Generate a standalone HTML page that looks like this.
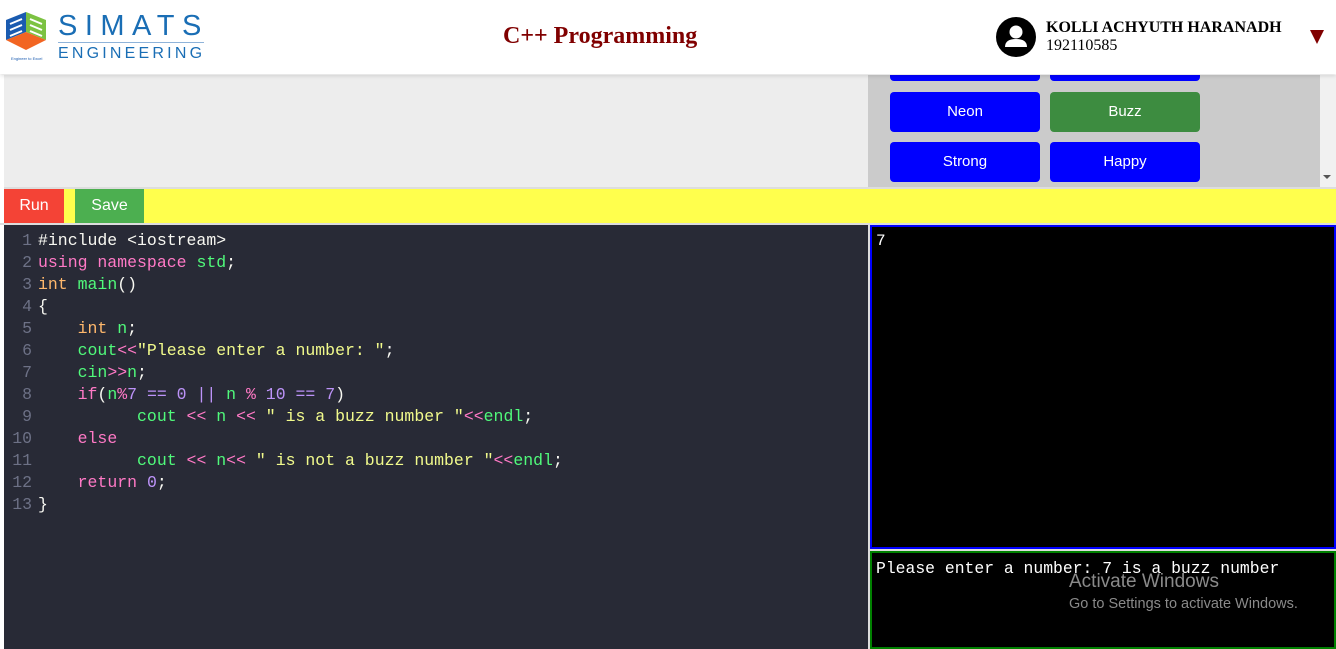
<!DOCTYPE html>
<html><head><meta charset="utf-8"><style>
*{margin:0;padding:0;box-sizing:border-box}
body{width:1336px;height:649px;overflow:hidden;background:#fff;font-family:"Liberation Sans",sans-serif;position:relative}
.hdr{position:absolute;left:0;top:0;width:1336px;height:74px;background:#fff;box-shadow:0 2px 4px rgba(0,0,0,.12);z-index:2}
.abs{position:absolute}
.btn{position:absolute;width:150px;height:40px;border-radius:4px;background:#0000ff;color:#fff;font-size:15px;text-align:center;line-height:40px}
.code{position:absolute;left:4px;top:225px;width:864px;height:424px;background:#282a36;font-family:"Liberation Mono",monospace;font-size:16.5px;line-height:22px;color:#f8f8f2;padding-top:5px;white-space:pre}
.ln{display:inline-block;width:28px;text-align:right;color:#6d7186;margin-right:6px}
.k{color:#ff79c6}.g{color:#50fa7b}.o{color:#ffb86c}.s{color:#f1fa8c}.p{color:#bd93f9}
</style></head><body>
<div class="hdr">
 <svg class="abs" style="left:4px;top:10px" width="44" height="44" viewBox="0 0 44 44">
  <polygon points="2,10 22,2 22,22 2,30" fill="#1a5bb0"/>
  <polygon points="22,2 42,10 42,30 22,22" fill="#7cc242"/>
  <polygon points="2,30 22,22 42,30 22,40" fill="#f26522"/>
  <path d="M6 14 L18 9 M6 20 L18 15 M6 26 L18 21" stroke="#fff" stroke-width="2"/>
  <path d="M26 9 L38 14 M26 15 L38 20 M26 21 L38 26" stroke="#fff" stroke-width="2"/>
 </svg>
 <div class="abs" style="left:11px;top:56px;font-size:4px;color:#1a5bb0">Engineer to Excel</div>
 <div class="abs" style="left:58px;top:10px;font-size:29px;color:#1a6eb5;letter-spacing:7.5px;line-height:32px">SIMATS</div>
 <div class="abs" style="left:58px;top:42px;width:146px;height:1px;background:#8fb3d9"></div>
 <div class="abs" style="left:58px;top:45px;font-size:16px;color:#1a6eb5;letter-spacing:3.2px;line-height:18px">ENGINEERING</div>
 <div class="abs" style="left:503px;top:23px;font-family:'Liberation Serif',serif;font-weight:bold;font-size:24px;color:#800000">C++ Programming</div>
 <svg class="abs" style="left:996px;top:17px" width="40" height="40" viewBox="0 0 40 40"><circle cx="20" cy="20" r="20" fill="#000"/><circle cx="20" cy="15" r="6.5" fill="#fff"/><path d="M9 30 Q9 22 20 22 Q31 22 31 30 Z" fill="#fff"/></svg>
 <div class="abs" style="left:1046px;top:19px;font-family:'Liberation Serif',serif;font-weight:bold;font-size:16px;color:#000">KOLLI ACHYUTH HARANADH</div>
 <div class="abs" style="left:1046px;top:37px;font-family:'Liberation Serif',serif;font-size:16px;color:#000">192110585</div>
 <div class="abs" style="left:1310px;top:30px;width:0;height:0;border-left:7px solid transparent;border-right:7px solid transparent;border-top:14px solid #800000"></div>
</div>
<div class="abs" style="left:4px;top:75px;width:864px;height:112px;background:#ededed"></div>
<div class="abs" style="left:868px;top:75px;width:452px;height:112px;background:#cbcbcb;overflow:hidden">
 <div class="btn" style="left:22px;top:-34px"></div><div class="btn" style="left:182px;top:-34px"></div>
 <div class="btn" style="left:22px;top:17px">Neon</div><div class="btn" style="left:182px;top:17px;background:#3d8c40">Buzz</div>
 <div class="btn" style="left:22px;top:67px">Strong</div><div class="btn" style="left:182px;top:67px">Happy</div>
</div>
<div class="abs" style="left:1320px;top:75px;width:16px;height:112px;background:#f1f1f1"></div>
<div class="abs" style="left:1323px;top:175px;border-left:4px solid transparent;border-right:4px solid transparent;border-top:4px solid #555"></div>
<div class="abs" style="left:4px;top:187px;width:1332px;height:2px;background:#ddd"></div>
<div class="abs" style="left:4px;top:189px;width:1332px;height:34px;background:#ffff4d"></div>
<div class="abs" style="left:4px;top:189px;width:60px;height:34px;background:#f44336;color:#fff;font-size:16px;text-align:center;line-height:34px">Run</div>
<div class="abs" style="left:75px;top:189px;width:69px;height:34px;background:#4caf50;color:#fff;font-size:16px;text-align:center;line-height:34px">Save</div>
<div class="abs" style="left:0;top:223px;width:1336px;height:2px;background:#ddd"></div>
<div class="code"><span class="ln">1</span>#include &lt;iostream&gt;
<span class="ln">2</span><span class="k">using namespace</span> <span class="g">std</span>;
<span class="ln">3</span><span class="o">int</span> <span class="g">main</span>()
<span class="ln">4</span>{
<span class="ln">5</span>    <span class="o">int</span> <span class="g">n</span>;
<span class="ln">6</span>    <span class="g">cout</span><span class="k">&lt;&lt;</span><span class="s">"Please enter a number: "</span>;
<span class="ln">7</span>    <span class="g">cin</span><span class="k">&gt;&gt;</span><span class="g">n</span>;
<span class="ln">8</span>    <span class="k">if</span>(<span class="g">n</span><span class="k">%</span><span class="p">7 == 0 || </span><span class="g">n</span> <span class="k">%</span> <span class="p">10 == 7</span>)
<span class="ln">9</span>          <span class="g">cout</span> <span class="k">&lt;&lt;</span> <span class="g">n</span> <span class="k">&lt;&lt;</span> <span class="s">" is a buzz number "</span><span class="k">&lt;&lt;</span><span class="g">endl</span>;
<span class="ln">10</span>    <span class="k">else</span>
<span class="ln">11</span>          <span class="g">cout</span> <span class="k">&lt;&lt;</span> <span class="g">n</span><span class="k">&lt;&lt;</span> <span class="s">" is not a buzz number "</span><span class="k">&lt;&lt;</span><span class="g">endl</span>;
<span class="ln">12</span>    <span class="k">return</span> <span class="p">0</span>;
<span class="ln">13</span>}</div>
<div class="abs" style="left:868px;top:225px;width:2px;height:424px;background:#ddd"></div>
<div class="abs" style="left:870px;top:225px;width:466px;height:324px;background:#000;border:2px solid #0000ff;color:#fff;font-family:'Liberation Mono',monospace;font-size:16px;padding:5px 4px">7</div>
<div class="abs" style="left:870px;top:549px;width:466px;height:2px;background:#ddd"></div>
<div class="abs" style="left:870px;top:551px;width:466px;height:98px;background:#000;border:2px solid #008000;color:#fff;font-family:'Liberation Mono',monospace;font-size:16.4px;padding:6px 4px;white-space:pre">Please enter a number: 7 is a buzz number</div>
<div class="abs" style="left:1069px;top:571px;color:#8a8a8a;font-size:19px">Activate Windows</div>
<div class="abs" style="left:1069px;top:596px;color:#8a8a8a;font-size:14.5px">Go to Settings to activate Windows.</div>
</body></html>
